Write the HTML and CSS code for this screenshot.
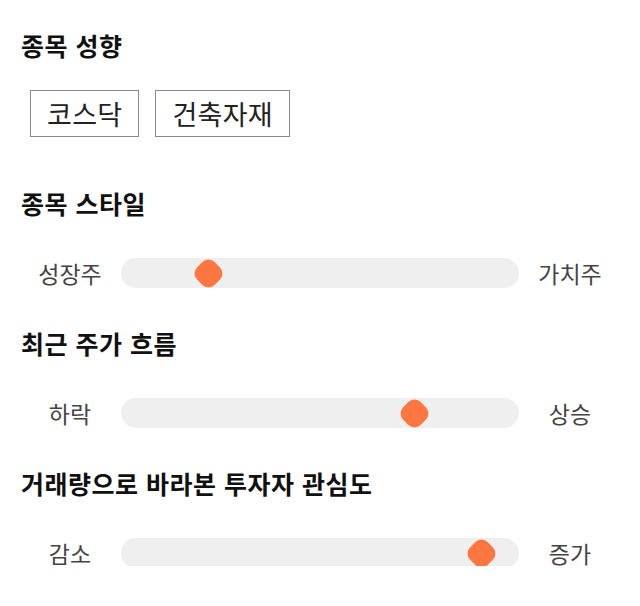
FILE: index.html
```html
<!DOCTYPE html>
<html lang="ko">
<head>
<meta charset="utf-8">
<link rel="stylesheet" href="styles.css">
</head>
<body>
<main class="page">
  <section class="group">
    <h2 class="title">종목 성향</h2>
    <div class="chips">
      <span class="chip">코스닥</span>
      <span class="chip">건축자재</span>
    </div>
  </section>
  <section class="group">
    <h2 class="title">종목 스타일</h2>
    <div class="slider">
      <span class="label">성장주</span>
      <div class="track"><span class="thumb" style="left:22%"></span></div>
      <span class="label">가치주</span>
    </div>
  </section>
  <section class="group">
    <h2 class="title">최근 주가 흐름</h2>
    <div class="slider">
      <span class="label">하락</span>
      <div class="track"><span class="thumb" style="left:73.75%"></span></div>
      <span class="label">상승</span>
    </div>
  </section>
  <section class="group">
    <h2 class="title">거래량으로 바라본 투자자 관심도</h2>
    <div class="slider">
      <span class="label">감소</span>
      <div class="track"><span class="thumb" style="left:90.5%"></span></div>
      <span class="label">증가</span>
    </div>
  </section>
</main>
</body>
</html>
```
FILE: styles.css
```css
* { box-sizing: border-box; }
html, body { margin: 0; padding: 0; background: #fff; }
body {
  font-family: "Noto Sans CJK KR", "Noto Sans", sans-serif;
  color: #111;
}
.page {
  padding: 29px 20px 0 20px;
  display: flex;
  flex-direction: column;
}
.group { display: flex; flex-direction: column; }
.group + .group { margin-top: 50px; }
.group:nth-child(n+3) { margin-top: 41px; }
.title {
  margin: 0;
  padding-left: 1px;
  font-size: 25px;
  line-height: 32px;
  font-weight: 700;
  letter-spacing: 0.5px;
  color: #111;
}
.chips {
  display: flex;
  gap: 16px;
  margin-top: 29px;
  padding-left: 10px;
}
.chip {
  display: inline-flex;
  align-items: center;
  height: 47px;
  padding: 0 16px 0 16px;
  border: 1px solid #8a8a8a;
  font-size: 27px;
  letter-spacing: 0.3px;
  color: #222;
}
.slider {
  display: grid;
  grid-template-columns: 100px 1fr 100px;
  align-items: center;
  margin-top: 37px;
  height: 30px;
}
.label {
  text-align: center;
  font-size: 23px;
  color: #444;
}
.track {
  position: relative;
  height: 30px;
  margin: 0 1px;
  background: #efefef;
  border-radius: 15px;
}
.thumb {
  position: absolute;
  top: 50%;
  width: 25px;
  height: 25px;
  margin: -12.5px 0 0 -12.5px;
  background: #ff7640;
  border-radius: 9px;
  transform: rotate(45deg);
}
```
